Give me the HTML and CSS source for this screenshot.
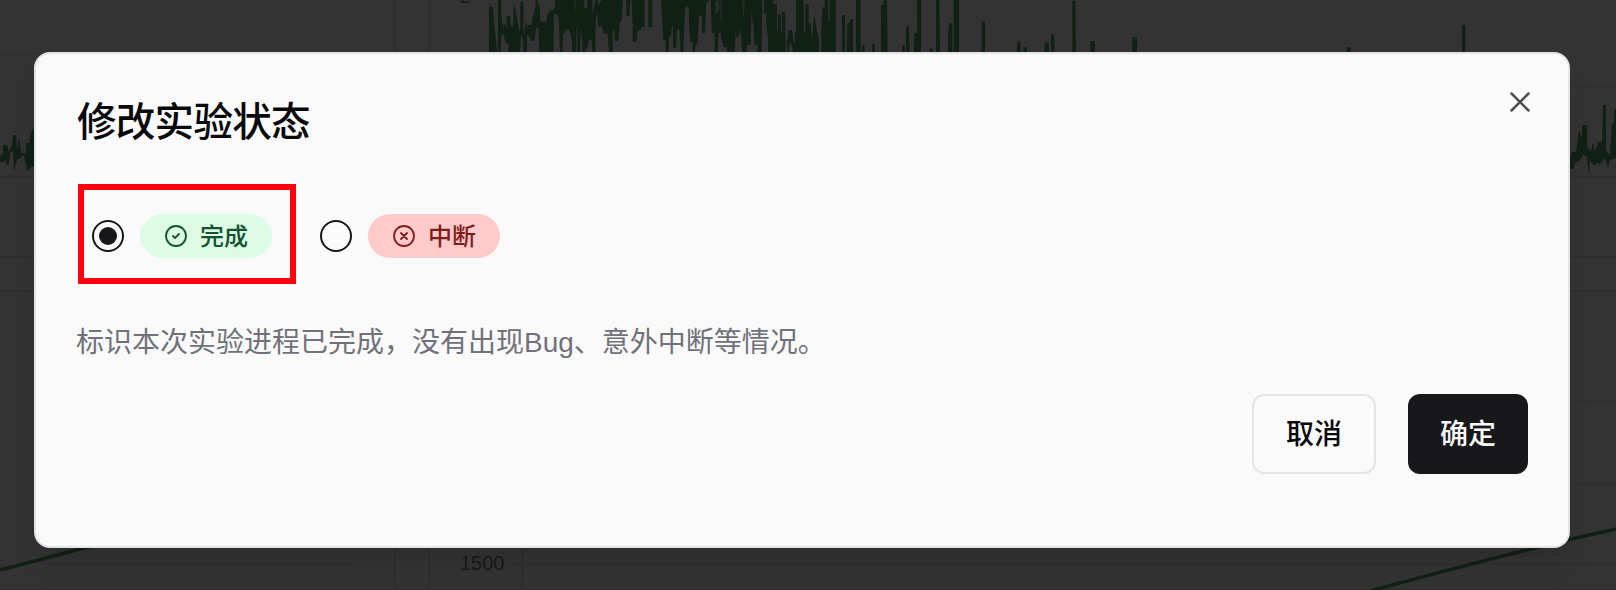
FILE: index.html
```
<!DOCTYPE html>
<html lang="zh-CN">
<head>
<meta charset="utf-8">
<title>修改实验状态</title>
<link rel="stylesheet" href="styles.css">
</head>
<body>
<svg class="charts" width="1616" height="590" viewBox="0 0 1616 590" aria-hidden="true">
  <g class="grid">
    <path d="M395 0V590M429 0V590M522.500 520V590M0 176.500H395M429 176.500H1616M0 257H1616M0 291H1616"/>
    <path class="faint" d="M490 0V60M0 54H352M1500 86H1616M1500 402H1616M1500 483.500H1616M42 564H352M510 564H1616"/>
  </g>
  <path class="edge" d="M0 589.500H1616"/>
  <g class="wave" transform="translate(440 0) scale(.33333)">
    <path d="M147 160V20H158L160 40 163 75 168 120 172 160Z"/>
    <path d="M174 160V0H183L184 50 190 90 192 70 200 85V48H210L212 78 219 80 222 10 234 70 238 95 241 90V5H250V110L258 60 262 85 264 75H275L278 55 286 20 287 0H292L299 20 301 65H320L322 45 332 28 334 35 345 22V0H432L433 25 442 25V0H457V45L462 20 467 0H473L475 15 485 0H548L545 60 539 70 535 124H524V90H518V160H507L503 102 490 100 487 82 475 80 471 35 467 60 466 160H457L455 120 447 118 442 145 436 148V160H427V130L422 80 420 160H412V80L409 85V160H397L395 115 387 88 380 90 369 105 367 160H360L357 65 352 42H342L340 160H298L295 80 288 85 284 122H275L267 110 262 100 260 160H250V120L243 105 240 160H228V160H205V132L197 130 190 100 183 110 182 160Z"/>
    <path d="M559 0V48H568L571 0ZM575 0 578 80V125H590L592 92 603 90V82H614V0ZM625 0V82H637V0Z"/>
    <path d="M663 0 668 90 670 120H677V160H685L688 112 693 110 695 80H699V143H709L711 90 718 88 722 160H730L735 20H746L748 100 752 125 758 125V160H764L767 135 773 130 777 48H786V100H795L799 6H806V0H812L816 100H824V160H833L836 100 842 98 844 115 850 140 860 142V160H884L888 80V110H897L901 85 907 160H920L921 135H932L935 20 937 60 941 80 943 134H952V160H965L967 0Z"/>
    <path d="M972 0V40H978L980 80 984 110V160H1034L1037 150V125H1041V155L1045 160 1050 125 1055 135 1060 160H1137V120L1130 90 1123 42 1117 100 1113 110V70H1106V13H1096V95H1091V0H1068V95H1065V125H1060V115L1055 90H1046L1042 120 1036 125V35H1026V100H1023V42H1014V90H1011V13H1001V0Z"/>
    <path d="M1144 160V95L1147 22H1154V0H1165V65H1169V0H1187V160Z"/>
    <path transform="translate(-120 0)" d="M1326 160V45H1335V160ZM1340 160 1342 70 1350 66V57H1359V160ZM1368 160V0H1382V160ZM1386 160V136H1394V160ZM1416 160V132H1425V160ZM1443 160V15H1451V0H1461L1463 160ZM1506 160V136H1515V160ZM1518 160V79H1527L1529 160ZM1542 160V100H1551V0H1563V160ZM1589 160V146H1598V160ZM1608 160V0H1618L1620 160ZM1644 160V100L1648 70H1657V160ZM1661 160V0H1677V160ZM1745 160V64H1755V160ZM1851 160V125H1862V160ZM1871 160V142H1881V160ZM1934 160V128H1947V160ZM1953 160V103H1963V160ZM2017 160V3H2026L2028 160ZM2071 160V123H2085V160ZM2197 160V112H2211V160Z"/>
    <path d="M2720 160V142H2733V160ZM3066 160V75H3076V160Z"/>
    <path class="gaps" d="M403 0V20L407 40V0ZM829 65V45L839 25 836 0H832L825 10ZM841 60 845 68V0H841ZM907 0 911 60 914 0Z"/>
  </g>
  <path class="wave" d="M0 156 3 154V145H7L9 152 12 145 13 135H16L17 150 19 137 21 153 26 154V143H29L31 132 34 128V167H31L27 171 24 155 21 157 17 160 14 171 13 151 10 153 9 164 6 165V160L2 163 0 161Z"/>
  <path class="wave" d="M1570 158 1572 152H1576L1577 144 1579 130 1582 138V125H1587V147L1591 151 1593 142 1595 152 1598 142H1602V152L1603 105H1606V150L1610 155 1612 123H1614V109H1616V158L1610 160 1608 168 1605 158 1600 164 1596 163V165H1593L1590 160 1589 176 1587 157 1583 155 1579 161 1575 163 1574 169H1570Z"/>
  <path class="curve" d="M0 570 92 546M1370 591C1450 569 1540 546 1616 529"/>
  <text class="tick" x="460" y="3">2</text>
  <text class="tick" x="460" y="570">1500</text>
</svg>
<main class="stage">
  <section class="dialog" role="dialog" aria-labelledby="title">
    <header class="head">
      <h1 class="title" id="title">修改实验状态</h1>
      <button class="close" aria-label="关闭">
        <svg width="32" height="32" viewBox="0 0 32 32"><path d="M7.500 7.500 24.500 24.500M24.500 7.500 7.500 24.500"/></svg>
      </button>
    </header>
    <div class="options">
      <label class="option marked">
        <span class="radio checked"></span>
        <span class="badge done">
          <svg class="icon" viewBox="0 0 24 24"><circle cx="12" cy="12" r="10"/><path d="m9 12 2 2 4-4"/></svg><span class="label">完成</span>
        </span>
      </label>
      <label class="option">
        <span class="radio"></span>
        <span class="badge broken">
          <svg class="icon" viewBox="0 0 24 24"><circle cx="12" cy="12" r="10"/><path d="m15 9-6 6M9 9l6 6"/></svg><span class="label">中断</span>
        </span>
      </label>
    </div>
    <p class="desc">标识本次实验进程已完成，没有出现Bug、意外中断等情况。</p>
    <footer class="actions">
      <button class="btn outline">取消</button>
      <button class="btn solid">确定</button>
    </footer>
  </section>
</main>
</body>
</html>
```
FILE: styles.css
```
* {
  box-sizing: border-box;
}

body {
  margin: 0;
  height: 590px;
  overflow: hidden;
  background: #333;
  font-family: "Liberation Sans", "Noto Sans CJK SC", sans-serif;
}

.charts {
  position: absolute;
  inset: 0;
}

.grid {
  stroke: #2e2e2e;
  stroke-width: 2;
}

.grid .faint {
  stroke: #303030;
}

.edge {
  stroke: #30282c;
}

.wave {
  fill: #112014;
}

.wave .gaps {
  fill: #262c28;
}

.curve {
  fill: none;
  stroke: #112014;
  stroke-width: 3.500;
}

.tick {
  fill: #181818;
  font-size: 20px;
}

.stage {
  position: relative;
  padding: 52px 46px 0 34px;
}

.dialog {
  height: 496px;
  padding: 40px;
  background: #fafafa;
  border: 2px solid #e4e4e5;
  border-radius: 16px;
  box-shadow: 0 20px 30px -6px rgba(0, 0, 0, .1), 0 8px 12px -8px rgba(0, 0, 0, .1);
}

.head {
  display: flex;
  justify-content: space-between;
  height: 90px;
}

.title {
  margin: 0;
  padding-left: 1px;
  font-family: "Noto Sans CJK SC", sans-serif;
  font-size: 39.500px;
  font-weight: 500;
  line-height: 50px;
  letter-spacing: -.7px;
  color: #09090b;
}

.close {
  width: 32px;
  height: 32px;
  margin: -8px -8px 0 0;
  padding: 0;
  border: 0;
  background: none;
}

.close svg {
  display: block;
  fill: none;
  stroke: #4f4f50;
  stroke-width: 2.500;
  stroke-linecap: round;
}

.options {
  display: flex;
  align-items: center;
  gap: 24px;
  height: 100px;
  margin-left: 2px;
}

.option {
  display: flex;
  align-items: center;
  gap: 16px;
}

.marked {
  width: 218px;
  height: 100px;
  padding: 4px 0 0 8px;
  border: 6px solid #ff000d;
}

.option:not(.marked) {
  padding-top: 4px;
}

.radio {
  display: grid;
  place-items: center;
  width: 32px;
  height: 32px;
  border: 2px solid #18181b;
  border-radius: 50%;
}

.checked::after {
  content: "";
  width: 18px;
  height: 18px;
  border-radius: 50%;
  background: #18181b;
}

.badge {
  display: flex;
  align-items: center;
  gap: 12px;
  width: 132px;
  height: 44px;
  padding-left: 24px;
  border-radius: 22px;
  font-family: "Noto Sans CJK SC", sans-serif;
  font-size: 24px;
  font-weight: 500;
  line-height: 32px;
}

.label {
  padding-bottom: 2px;
}

.done {
  background: #dcfce7;
  color: #14532d;
}

.broken {
  background: #fecaca;
  color: #7f1d1d;
}

.icon {
  flex: none;
  width: 24px;
  height: 24px;
  fill: none;
  stroke: currentColor;
  stroke-width: 1.800;
  stroke-linecap: round;
  stroke-linejoin: round;
}

.desc {
  margin: 39px 0 31px;
  font-size: 28px;
  line-height: 40px;
  color: #71717a;
}

.actions {
  display: flex;
  justify-content: flex-end;
  gap: 32px;
}

.btn {
  height: 80px;
  padding: 0 0 4px;
  border: 0;
  border-radius: 12px;
  font-family: "Noto Sans CJK SC", sans-serif;
  font-size: 28px;
  font-weight: 500;
  line-height: 40px;
}

.outline {
  width: 124px;
  border: 2px solid #e4e4e5;
  background: #fafafa;
  color: #09090b;
}

.solid {
  width: 120px;
  background: #18181b;
  color: #fafafa;
}
```
